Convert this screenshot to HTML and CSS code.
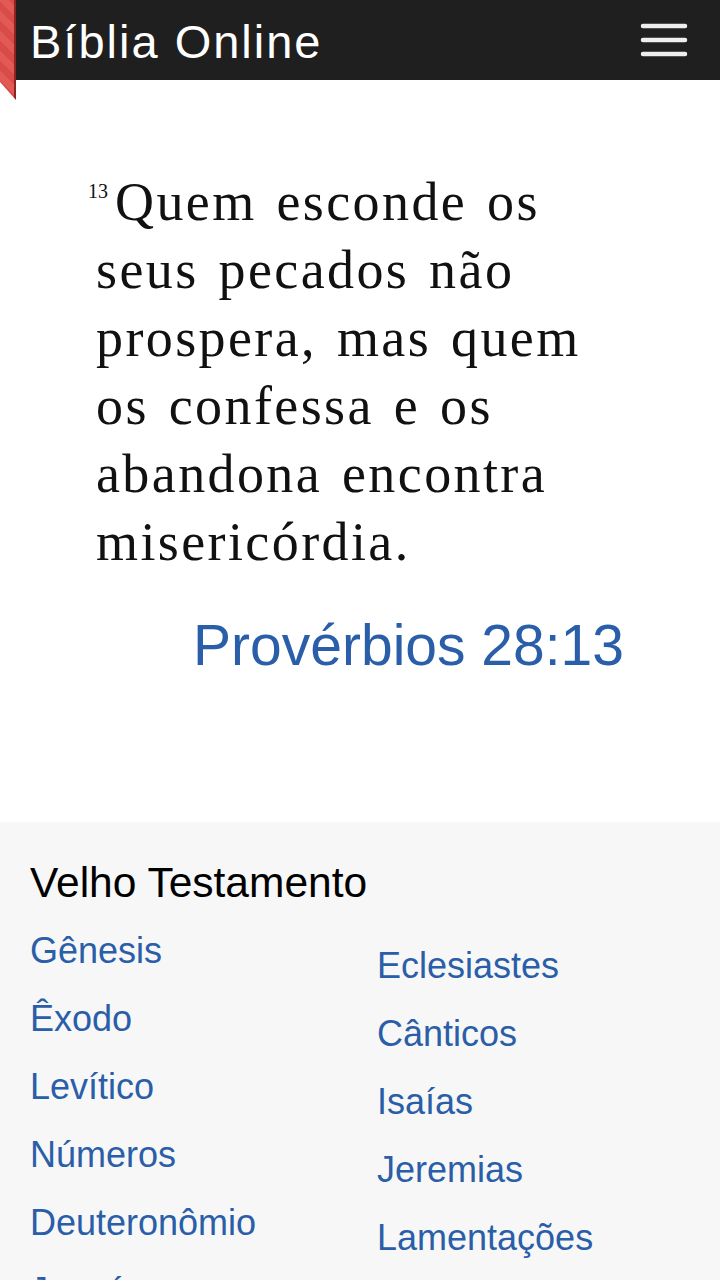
FILE: index.html
```html
<!DOCTYPE html>
<html lang="pt-BR">
<head>
<meta charset="utf-8">
<title>Bíblia Online</title>
<link rel="stylesheet" href="styles.css">
</head>
<body>
<header class="topbar">
  <span class="ribbon"></span>
  <h1 class="brand">Bíblia Online</h1>
  <button class="menu" aria-label="Menu">
    <svg width="48" height="36" viewBox="0 0 48 36">
      <g stroke="#eeeeee" stroke-width="4.5" stroke-linecap="round">
        <line x1="3" y1="4" x2="45" y2="4"/>
        <line x1="3" y1="18" x2="45" y2="18"/>
        <line x1="3" y1="32" x2="45" y2="32"/>
      </g>
    </svg>
  </button>
</header>

<main class="verse-area">
  <p class="verse"><span class="num">13</span>Quem esconde os seus pecados não prospera, mas quem os confessa e os abandona encontra misericórdia.</p>
  <a class="ref" href="#">Provérbios 28:13</a>
</main>

<section class="books">
  <h2 class="books-title">Velho Testamento</h2>
  <div class="cols">
    <ul class="col">
      <li><a href="#">Gênesis</a></li>
      <li><a href="#">Êxodo</a></li>
      <li><a href="#">Levítico</a></li>
      <li><a href="#">Números</a></li>
      <li><a href="#">Deuteronômio</a></li>
      <li><a href="#">Josué</a></li>
    </ul>
    <ul class="col col-right">
      <li><a href="#">Eclesiastes</a></li>
      <li><a href="#">Cânticos</a></li>
      <li><a href="#">Isaías</a></li>
      <li><a href="#">Jeremias</a></li>
      <li><a href="#">Lamentações</a></li>
      <li><a href="#">Ezequiel</a></li>
    </ul>
  </div>
</section>
</body>
</html>
```

FILE: styles.css
```css
* { box-sizing: border-box; }

html, body {
  margin: 0;
  padding: 0;
  background: #ffffff;
  font-family: "Liberation Sans", Arial, sans-serif;
}

body { overflow: hidden; height: 1280px; }

.topbar {
  position: relative;
  height: 80px;
  background: #1f1f1f;
  display: flex;
  align-items: center;
  justify-content: space-between;
  padding: 0 30px 0 30px;
}

.ribbon {
  position: absolute;
  left: 0;
  top: 0;
  width: 16px;
  height: 100px;
  background:
    repeating-linear-gradient(45deg, #e15a55 0 7px, #d84b48 7px 14px);
  border-right: 2px solid #8e2323;
  clip-path: polygon(0 0, 100% 0, 100% 100%, 0 82%);
  z-index: 2;
}

.brand {
  margin: 0;
  padding-top: 4px;
  color: #ffffff;
  font-weight: normal;
  font-size: 47px;
  letter-spacing: 2px;
  line-height: 54px;
}

.menu {
  background: none;
  border: 0;
  padding: 0;
  margin-right: 2px;
  width: 48px;
  height: 40px;
  display: flex;
  align-items: center;
  justify-content: center;
}

.verse-area {
  padding: 88px 96px 0 96px;
  height: 742px;
  display: flex;
  flex-direction: column;
}

.verse {
  margin: 0;
  font-family: "Liberation Serif", "Times New Roman", serif;
  font-size: 54px;
  line-height: 68px;
  letter-spacing: 2.4px;
  word-spacing: 4px;
  color: #111111;
  text-indent: -8px;
}

.num {
  font-size: 20px;
  line-height: 1;
  letter-spacing: 0;
  word-spacing: 0;
  vertical-align: 22px;
  margin-right: 7px;
}

.ref {
  align-self: flex-end;
  margin-top: 36px;
  font-size: 57px;
  line-height: 66px;
  color: #2a5ea8;
  text-decoration: none;
}

.books {
  background: #f7f7f7;
  padding: 37px 30px 0 30px;
}

.books-title {
  margin: 0;
  font-size: 42.5px;
  font-weight: normal;
  line-height: 48px;
  color: #000000;
}

.cols {
  display: grid;
  grid-template-columns: 347px 1fr;
  margin-top: 10px;
}

.col {
  list-style: none;
  margin: 0;
  padding: 0;
}

.col-right { padding-top: 15px; }

.col li {
  font-size: 36px;
  line-height: 68px;
}

.col a {
  color: #2a5ea8;
  text-decoration: none;
}
```
